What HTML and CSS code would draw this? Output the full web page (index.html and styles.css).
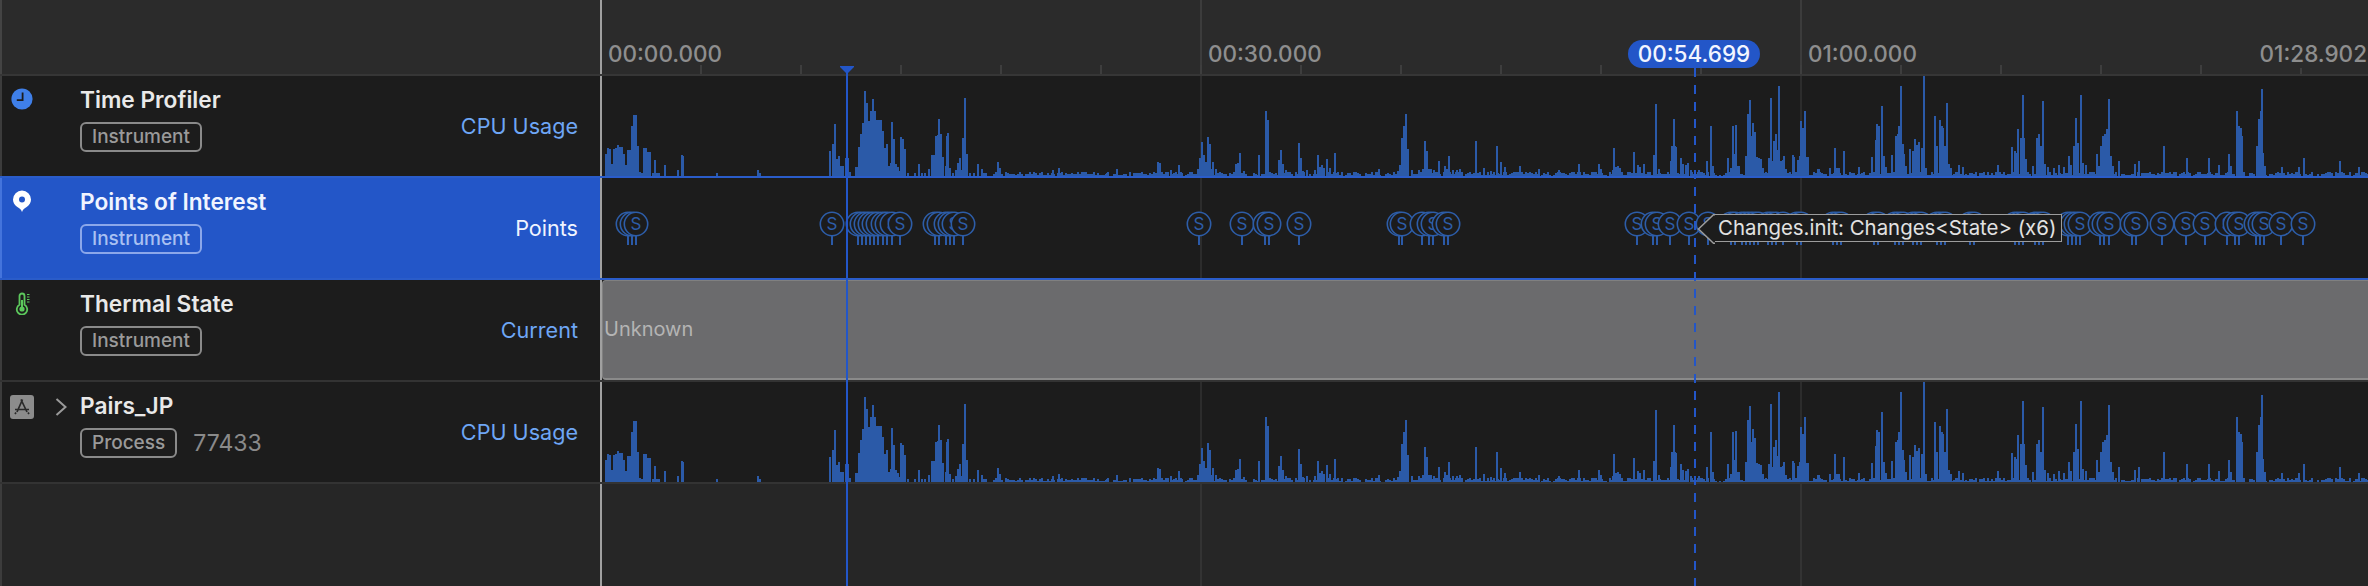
FILE: index.html
```html
<!DOCTYPE html>
<html lang="en">
<head>
  <meta charset="UTF-8" />
  <title>Instruments</title>
  <link rel="stylesheet" href="styles.css">
</head>
<body>
  <div class="app">
    <div class="ruler">
      <div class="ruler-side"></div>
      <div class="ruler-times">
        <span class="time">00:00.000</span>
        <span class="time">00:30.000</span>
        <span class="time">01:00.000</span>
        <span class="time-end">01:28.902</span>
      </div>
    </div>

    <div class="row row-blue">
      <div class="label">
        <div class="label-left">
          <div class="icon-slot">
            <svg class="icon" viewBox="0 0 24 24">
              <circle cx="12" cy="12" r="10.6" fill="#3f7fe8" />
              <path d="M12.6 5.6v7.6H6.8" fill="none" stroke="#1c1c1c" stroke-width="1.8" />
            </svg>
          </div>
          <div>
            <div class="title">Time Profiler</div>
            <div class="tags"><span class="tag">Instrument</span></div>
          </div>
        </div>
        <div class="kind">CPU Usage</div>
      </div>
      <div class="track"><svg class="graph" width="1766" height="100"></svg></div>
    </div>

    <div class="row row-blue row-selected">
      <div class="label">
        <div class="label-left">
          <div class="icon-slot">
            <svg class="icon" viewBox="0 0 24 24">
              <path d="M12 23c-1-3-3-3.600-5-5.200C4.400 16 3 13.400 3 10.500a9 9 0 0 1 18 0c0 2.900-1.400 5.500-4 7.300-2 1.600-4 2.200-5 5.200z" fill="#fff" />
              <circle cx="12" cy="10.500" r="3" fill="#2356c8" />
            </svg>
          </div>
          <div>
            <div class="title">Points of Interest</div>
            <div class="tags"><span class="tag">Instrument</span></div>
          </div>
        </div>
        <div class="kind">Points</div>
      </div>
      <div class="track"><svg class="pins" width="1766" height="100"></svg></div>
    </div>

    <div class="row">
      <div class="label">
        <div class="label-left">
          <div class="icon-slot">
            <svg class="icon" viewBox="0 0 24 24">
              <path d="M9.500 13.800V5a2.500 2.500 0 0 1 5 0v8.800a5.200 5.200 0 1 1-5 0z" fill="none" stroke="#5cc85c" stroke-width="1.800" />
              <path d="M12 18V9" stroke="#5cc85c" stroke-width="2" />
              <circle cx="12" cy="18" r="2.600" fill="#5cc85c" />
              <path d="M17 3.500h2.500M17 6h2.500M17 8.500h2.500M17 11h2.500" stroke="#5cc85c" stroke-width="1.200" />
            </svg>
          </div>
          <div>
            <div class="title">Thermal State</div>
            <div class="tags"><span class="tag">Instrument</span></div>
          </div>
        </div>
        <div class="kind">Current</div>
      </div>
      <div class="track"><div class="thermal">Unknown</div></div>
    </div>

    <div class="row">
      <div class="label">
        <div class="label-left">
          <div class="icon-slot">
            <svg class="icon icon-app" viewBox="0 0 24 24">
              <rect x="0" y="0" width="24" height="24" rx="3" fill="#8c8c8c" />
              <path d="M12.500 4.500 7 17M11 4.500 17 17M5 14.500h14M6 17.500l-1 1.500M18 17.500l1 1.500" fill="none" stroke="#2a2a2a" stroke-width="1.700" />
            </svg>
            <svg class="chevron" viewBox="0 0 12 18">
              <path d="M1.500 1 10.500 9 1.500 17" fill="none" stroke="#9a9a9a" stroke-width="2" />
            </svg>
          </div>
          <div>
            <div class="title">Pairs_JP</div>
            <div class="tags"><span class="tag">Process</span><span class="pid">77433</span></div>
          </div>
        </div>
        <div class="kind">CPU Usage</div>
      </div>
      <div class="track"><svg class="graph" width="1766" height="100"></svg></div>
    </div>

    <div class="rest">
      <div class="rest-side"></div>
      <div class="rest-track"></div>
    </div>

    <div class="playhead"></div>
    <svg class="playhead-cap" viewBox="0 0 14 8"><path d="M0 0h14v1L7 8 0 1z" fill="#2356c8" /></svg>
    <div class="hover-line"></div>
    <div class="hover-time">00:54.699</div>

    <div class="tooltip">
      <svg class="tooltip-tip" viewBox="0 0 18 30"><path d="M18 .75H16.500L1.500 15l15 14.250H18" fill="#1c1c1c" stroke="#9c9c9c" stroke-width="1.500" /></svg>
      Changes.init: Changes&lt;State&gt; (x6)
    </div>
  </div>

  <script src="graphs.js"></script>
</body>
</html>
```

FILE: styles.css
```css
* {
  box-sizing: border-box;
}
html, body {
  margin: 0;
  background: #262626;
}
.app {
  position: relative;
  width: 2368px;
  height: 586px;
  overflow: hidden;
  font-family: Inter, "Liberation Sans", sans-serif;
  display: flex;
  flex-direction: column;
}

/* ruler */
.ruler {
  display: flex;
  height: 76px;
  background: #2b2b2b;
  border-bottom: 2px solid #363636;
  flex: none;
}
.ruler-side {
  width: 600px;
  flex: none;
  border-left: 2px solid #444;
}
.ruler-times {
  position: relative;
  flex: 1;
  min-width: 0;
  display: flex;
  border-left: 2px solid #a0a0a0;
  background:
    linear-gradient(90deg, transparent 98px, #3e3e3e 98px, #3e3e3e 100px, transparent 100px) 0 100% / 100px 9px repeat-x,
    linear-gradient(90deg, transparent 598px, #3c3c3c 598px, #3c3c3c 600px, transparent 600px) 0 0 / 600px 100%;
}
.time {
  width: 600px;
  flex: none;
  padding: 40px 0 0 6px;
  font-size: 22.5px;
  line-height: 28px;
  font-weight: 500;
  color: #8e8e8e;
}
.time-end {
  position: absolute;
  top: 40px;
  right: 1px;
  font-size: 22.5px;
  line-height: 28px;
  font-weight: 500;
  color: #8e8e8e;
  background: #2b2b2b;
}

/* rows */
.row {
  display: flex;
  height: 102px;
  flex: none;
  border-bottom: 2px solid #333;
}
.row-blue {
  border-bottom-color: #2a5cc9;
}
.label {
  width: 600px;
  flex: none;
  display: flex;
  justify-content: space-between;
  align-items: center;
  padding-right: 22px;
  background: #1c1c1c;
  border-left: 2px solid #3c3c3c;
}
.label-left {
  display: flex;
  align-self: flex-start;
}
.icon-slot {
  width: 78px;
  display: flex;
  align-items: flex-start;
}
.icon {
  width: 24px;
  height: 24px;
  margin: 11px 0 0 8px;
  flex: none;
}
.icon-app {
  margin-top: 13px;
}
.chevron {
  width: 12px;
  height: 18px;
  margin: 16px 0 0 21px;
  flex: none;
}
.title {
  margin-top: 10px;
  font-size: 22.7px;
  line-height: 28px;
  font-weight: 600;
  color: #e9e9e9;
}
.tags {
  display: flex;
  align-items: center;
  margin-top: 8px;
}
.tag {
  height: 30px;
  padding: 0 10px;
  border: 2px solid #8a8a8a;
  border-radius: 6px;
  font-size: 19px;
  line-height: 26px;
  font-weight: 500;
  color: #9a9a9a;
}
.pid {
  margin-left: 16px;
  font-size: 23px;
  color: #8a8a8a;
}
.kind {
  font-size: 21.6px;
  color: #6ea6f5;
}
.row-selected .label {
  background: #2356c8;
  border-left-color: #4474dc;
}
.row-selected .title,
.row-selected .kind {
  color: #f0f4ff;
}
.row-selected .tag {
  border-color: #8ba7ea;
  color: #a9c0f2;
}

/* timeline */
.track {
  flex: 1;
  min-width: 0;
  border-left: 2px solid #a0a0a0;
  background:
    linear-gradient(90deg, transparent 598px, #2c2c2c 598px, #2c2c2c 600px, transparent 600px) 0 0 / 600px 100%,
    #1c1c1c;
}
.graph, .pins {
  display: block;
}
.thermal {
  height: 100px;
  padding-left: 1px;
  background: #6b6b6d;
  border: 1px solid #808080;
  border-bottom: 2px solid #8a8a8a;
  border-right: none;
  border-radius: 4px 0 0 4px;
  font-size: 20px;
  line-height: 97px;
  color: #b4b4b4;
}
.rest {
  flex: 1;
  display: flex;
}
.rest-side {
  width: 600px;
  flex: none;
  background: #262626;
  border-left: 2px solid #3c3c3c;
}
.rest-track {
  flex: 1;
  border-left: 2px solid #a0a0a0;
  background:
    linear-gradient(90deg, transparent 598px, #333 598px, #333 600px, transparent 600px) 0 0 / 600px 100%,
    #262626;
}

/* overlays */
.playhead {
  position: absolute;
  left: 846px;
  top: 70px;
  bottom: 0;
  width: 2px;
  background: #2356c8;
}
.playhead-cap {
  position: absolute;
  left: 840px;
  top: 66px;
  width: 14px;
  height: 8px;
}
.hover-line {
  position: absolute;
  left: 1694px;
  top: 68px;
  bottom: 0;
  width: 2px;
  background: repeating-linear-gradient(180deg, #2356c8 0, #2356c8 9px, transparent 9px, transparent 17px);
}
.hover-time {
  position: absolute;
  left: 1628px;
  top: 40px;
  width: 132px;
  height: 28px;
  border-radius: 14px;
  background: #2356c8;
  font-size: 22.5px;
  line-height: 28px;
  font-weight: 500;
  text-align: center;
  color: #f2f5ff;
}
.tooltip {
  position: absolute;
  left: 1714px;
  top: 214px;
  width: 348px;
  height: 28px;
  padding-left: 4px;
  background: #1c1c1c;
  border: 1.5px solid #9c9c9c;
  border-left: none;
  font-size: 20.4px;
  line-height: 26px;
  white-space: nowrap;
  color: #e2e2e2;
}
.tooltip-tip {
  position: absolute;
  left: -17px;
  top: -1.5px;
  width: 18px;
  height: 30px;
}
```

FILE: graphs.js
```js
// x is the page pixel of the bar, h its height. Bars are 2px wide.
const spikes = [
  [605,22],[607,28],[609,27],[611,12],[613,27],[615,28],[617,31],[619,29],[621,29],[623,22],[625,11],[627,26],[629,26],
  [631,50],[633,61],[635,61],[637,30],[639,4],[641,3],[643,28],[645,28],[647,24],[649,24],[652,3],[654,16],[656,3],[658,3],
  [664,11],[677,6],[681,21],[682,20],[716,3],[757,6],[759,3],
  [829,25],[832,32],[834,52],[836,17],[838,20],[840,10],[842,10],[845,18],[847,18],[849,4],
  [855,9],[857,9],[858,29],[860,42],[862,53],[864,85],[866,73],[868,55],[870,65],[872,77],[874,65],[876,56],[878,56],[880,56],
  [882,45],[884,28],[886,32],[888,10],[890,13],[891,54],[893,37],[895,12],[897,9],[899,5],[900,39],[902,37],[904,27],[907,3],
  [914,3],[918,12],[921,3],[924,3],[928,7],[931,21],[933,21],[935,40],[937,41],[938,57],[940,42],[942,19],[945,10],[946,40],[947,43],
  [949,8],[952,3],[955,6],[957,13],[959,18],[961,6],[962,38],[964,78],[966,22],[969,3],[973,3],[977,12],[981,7],[983,3],[985,3],
  [997,14],[999,8],[1052,6],[1058,8],[1106,3],[1116,7],[1157,14],[1159,13],[1170,6],[1178,11],[1180,4],
  [1197,7],[1199,18],[1201,34],[1203,21],[1205,14],[1207,39],[1209,32],[1211,7],[1212,14],[1215,7],
  [1235,12],[1237,13],[1239,23],[1243,5],[1258,21],[1265,65],[1267,56],[1278,16],[1280,26],[1282,12],[1285,6],
  [1298,33],[1300,18],[1302,5],[1306,6],[1314,6],[1317,21],[1319,9],[1321,11],[1323,8],[1326,17],[1329,8],[1334,23],[1337,4],
  [1378,7],[1397,5],[1399,11],[1401,38],[1403,50],[1405,62],[1407,27],[1411,6],[1418,6],[1422,7],[1424,35],[1426,25],[1428,7],[1430,7],[1433,6],
  [1438,15],[1444,10],[1446,7],[1448,20],[1452,6],[1456,6],[1459,7],[1475,35],[1479,4],[1483,8],[1487,4],[1490,5],
  [1496,30],[1500,14],[1504,9],[1519,10],[1538,7],[1558,6],[1578,12],
  [1598,12],[1600,7],[1612,6],[1613,28],[1615,9],[1617,10],[1619,8],[1633,24],[1637,11],[1639,9],[1643,12],[1653,21],[1655,72],[1658,7],
  [1670,15],[1671,30],[1673,57],[1674,30],[1675,29],[1680,18],[1682,12],[1685,11],[1687,13],[1690,6],[1694,6],[1698,6],[1706,15],[1710,50],[1712,10],
  [1727,18],[1730,8],[1732,50],[1733,22],[1735,51],[1737,10],[1738,10],[1745,20],[1747,62],[1749,76],[1750,40],[1752,53],[1754,44],[1756,19],[1758,18],[1760,17],[1762,8],
  [1768,18],[1770,78],[1772,15],[1773,35],[1775,42],[1777,26],[1778,90],[1780,15],[1782,16],[1783,20],[1785,7],
  [1792,21],[1793,19],[1797,16],[1799,20],[1800,55],[1802,48],[1804,65],[1805,19],[1807,19],
  [1817,7],[1818,7],[1829,8],[1834,28],[1836,8],[1838,8],[1843,25],[1858,9],
  [1871,19],[1875,36],[1876,52],[1878,50],[1881,70],[1883,20],[1885,9],[1891,21],[1895,40],[1897,42],[1898,50],[1900,90],[1902,32],[1903,22],[1905,10],
  [1909,27],[1912,25],[1914,37],[1916,31],[1918,34],[1921,28],[1923,100],[1925,8],[1934,60],[1936,30],[1939,56],[1941,50],[1942,48],[1944,30],[1946,73],[1948,12],[1950,8],
  [1958,11],[1962,9],[1997,11],[2011,29],[2014,25],[2016,23],[2017,47],[2020,38],[2022,81],[2023,38],[2025,17],[2032,10],
  [2036,38],[2038,42],[2040,30],[2042,75],[2044,12],[2047,9],[2053,8],[2058,11],[2063,9],[2068,20],[2070,11],[2073,30],[2075,58],[2077,33],[2080,81],[2082,13],[2085,11],
  [2096,22],[2098,10],[2100,30],[2102,40],[2104,42],[2106,47],[2108,77],[2110,20],[2112,10],[2118,15],[2134,12],[2138,15],[2163,30],[2186,18],[2208,18],[2218,11],
  [2228,22],[2230,10],[2236,65],[2238,50],[2240,48],[2241,40],[2256,30],[2258,57],[2260,65],[2261,87],[2262,23],[2264,10],[2281,9],[2298,9],[2303,18],[2339,15],[2358,9]
];

const pinX = [
  628,632,636,832,858,862,866,870,874,878,883,887,892,900,935,939,946,950,954,963,
  1199,1242,1265,1269,1299,1399,1402,1422,1429,1433,1444,1448,
  1637,1653,1657,1670,1689,1708,1731,1735,1742,1746,1750,1754,1758,1768,1772,1776,1783,1797,1801,
  1833,1837,1841,1874,1878,1895,1899,1903,1913,1917,1921,1937,1941,1945,1970,1974,
  2015,2019,2023,2035,2039,2043,2068,2072,2076,2080,2100,2104,2109,2132,2136,2162,2186,2205,2227,2235,2239,2256,2260,2264,2281,2303
];

const TRACK_LEFT = 602;
const BAR_COLOR = "#2b5aa8";

function buildBars() {
  // low activity floor that starts after the first bursts
  const heights = {};
  let seed = 7;
  for (let x = 993; x < 2368; x += 2) {
    seed = (seed * 137 + 59) % 1009;
    heights[x] = seed % 10 === 0 ? 0 : 1 + seed % 4;
  }
  let out = "";
  for (const x in heights) {
    if (heights[x]) out += `M${x - TRACK_LEFT} 100v-${heights[x]}h2v${heights[x]}z`;
  }
  for (const [x, h] of spikes) {
    out += `M${x - TRACK_LEFT} 100v-${h}h2v${h}z`;
  }
  return `<path d="${out}" fill="${BAR_COLOR}" shape-rendering="crispEdges" />`;
}

function buildPins() {
  return pinX.map(function (x) {
    const cx = x - TRACK_LEFT;
    return `<g><rect x="${cx - 1}" y="58" width="2" height="9" fill="#2b5aa8" />` +
      `<circle cx="${cx}" cy="46" r="11.700" fill="#1c1c1c" stroke="#2d5da8" stroke-width="1.600" />` +
      `<text x="${cx}" y="52" text-anchor="middle" font-size="17" fill="#2d5da8">S</text></g>`;
  }).join("");
}

document.querySelectorAll(".graph").forEach(function (svg) {
  svg.innerHTML = buildBars();
});
document.querySelectorAll(".pins").forEach(function (svg) {
  svg.innerHTML = buildPins();
});
```
